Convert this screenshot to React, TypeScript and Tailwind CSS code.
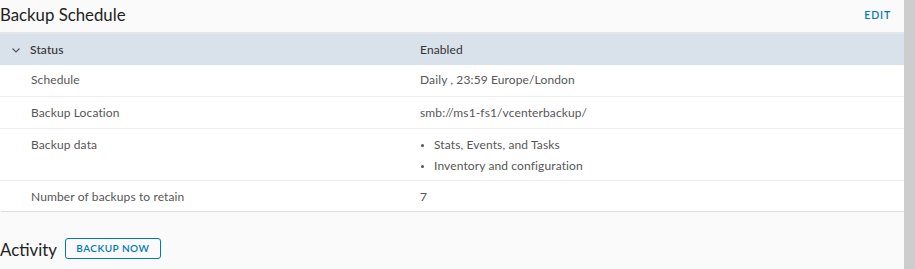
import React from "react";

const Row = ({ label, children, h }: { label: string; children: React.ReactNode; h: string }) => (
  <div className={`flex border-t border-[#eeeeee] bg-white ${h}`}>
    <div className="w-[420px] pl-[31px] pt-[7px] text-[12px] tracking-[0.01em] text-[#565656]">{label}</div>
    <div className="flex-1 pt-[7px] text-[12px] tracking-[0.01em] text-[#565656]">{children}</div>
  </div>
);

export default function App() {
  return (
    <div className="flex h-[269px] w-[915px] bg-[#fafafa]" style={{ fontFamily: "Lato, 'Open Sans', sans-serif" }}>
      <div className="flex w-[904px] flex-col">
        <div className="flex h-[32px] items-center justify-between">
          <div className="text-[16.8px] leading-none text-[#222] pb-[1px]">Backup Schedule</div>
          <div className="mr-[13px] pb-[1px] text-[10.5px] font-semibold tracking-[0.08em] text-[#0079b8]">EDIT</div>
        </div>
        <div className="rounded-bl-[3px] border-b border-t-2 border-[#dddddd] border-t-[#e3e6ea]">
          <div className="flex h-[31px] items-center bg-[#d9e1ea]">
            <div className="flex w-[420px] items-center">
              <svg width="10" height="10" viewBox="0 0 10 10" className="ml-[11px] mr-[9px]">
                <path d="M1.5 3.5 L5 7 L8.5 3.5" fill="none" stroke="#555" strokeWidth="1.1" />
              </svg>
              <span className="text-[12px] font-medium tracking-[0.01em] text-[#333]">Status</span>
            </div>
            <div className="text-[12px] tracking-[0.01em] text-[#333]">Enabled</div>
          </div>
          <div className="flex h-[31px] bg-white">
            <div className="w-[420px] pl-[31px] pt-[6px] text-[12px] tracking-[0.01em] text-[#565656]">Schedule</div>
            <div className="flex-1 pt-[6px] text-[12px] tracking-[0.01em] text-[#565656]">Daily , 23:59 Europe/London</div>
          </div>
          <Row label="Backup Location" h="h-[32px]">smb://ms1-fs1/vcenterbackup/</Row>
          <Row label="Backup data" h="h-[52px]">
            <ul className="flex flex-col gap-[3px]">
              <li className="flex items-center"><span className="mr-[10px] ml-[1px] inline-block h-[3px] w-[3px] rounded-full bg-[#565656]" />Stats, Events, and Tasks</li>
              <li className="flex items-center"><span className="mr-[10px] ml-[1px] inline-block h-[3px] w-[3px] rounded-full bg-[#565656]" />Inventory and configuration</li>
            </ul>
          </Row>
          <Row label="Number of backups to retain" h="h-[31px]">7</Row>
        </div>
        <div className="mt-[29px] flex items-center">
          <div className="text-[16.8px] leading-none text-[#222]">Activity</div>
          <button className="ml-[8px] mt-[-3px] h-[21px] w-[96px] rounded-[3px] border border-[#0079b8] text-[10px] font-semibold tracking-[0.05em] text-[#0079b8]">BACKUP NOW</button>
        </div>
      </div>
      <div className="w-[11px] bg-[#cdcdcd]" />
    </div>
  );
}
